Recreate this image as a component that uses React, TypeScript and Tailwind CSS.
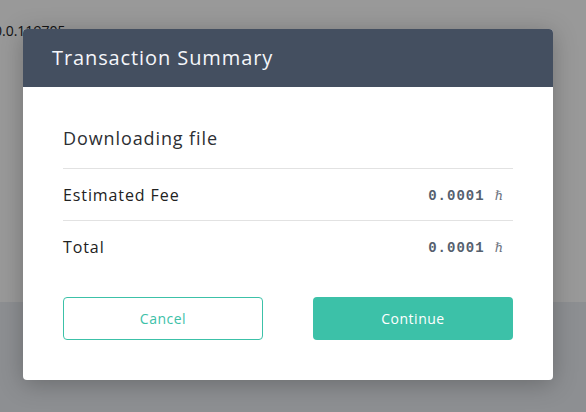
import { useState } from "react";

const rows = [
  { label: "Estimated Fee", value: "0.0001" },
  { label: "Total", value: "0.0001" },
];

function Amount({ value }: { value: string }) {
  return (
    <span className="flex items-baseline gap-[10px] pt-[4px]">
      <span className="font-['Liberation_Mono',monospace] text-[14px] font-bold tracking-[1px] text-[#55606e]">
        {value}
      </span>
      <span className="font-['DejaVu_Serif',serif] text-[13px] italic text-[#6b7280]">
        ℏ
      </span>
    </span>
  );
}

export default function App() {
  const [open, setOpen] = useState(true);

  return (
    <div className="relative h-[412px] w-[586px] overflow-hidden bg-white font-['Open_Sans',sans-serif]">
      {/* page under the dialog */}
      <div className="flex h-full flex-col">
        <div className="-ml-[6px] h-[62px] pt-[20px] text-[14px] text-[#222]">
          0.0.119705
        </div>
        <div className="h-[240px] bg-white"></div>
        <div className="flex-1 bg-[#eceef4]"></div>
      </div>

      {open && (
        <div className="absolute inset-0 bg-black/40">
          <div className="absolute left-[23px] top-[29px] w-[530px] overflow-hidden rounded-[4px] bg-white shadow-[0_4px_24px_rgba(0,0,0,0.25)]">
            <div className="flex h-[58px] items-center bg-[#444f60] px-[29px]">
              <h2 className="text-[20px] font-normal tracking-[0.9px] text-[#f4f6fa]">
                Transaction Summary
              </h2>
            </div>

            <div className="px-[40px] pt-[38px] pb-[40px]">
              <p className="pb-[16px] text-[18px] tracking-[0.9px] text-[#2d2f33]">
                Downloading file
              </p>
              {rows.map((r) => (
                <div
                  key={r.label}
                  className="flex h-[52px] items-center justify-between border-t border-[#e2e2e2] pr-[10px]"
                >
                  <span className="text-[16px] font-medium tracking-[0.9px] text-[#222]">
                    {r.label}
                  </span>
                  <Amount value={r.value} />
                </div>
              ))}

              <div className="mt-[25px] flex justify-between">
                <button
                  onClick={() => setOpen(false)}
                  className="h-[43px] w-[200px] rounded-[4px] border border-[#3cc1a8] bg-white text-[14px] tracking-[0.5px] text-[#3cc1a8]"
                >
                  Cancel
                </button>
                <button className="h-[43px] w-[200px] rounded-[4px] bg-[#3cc1a8] text-[14px] tracking-[0.5px] text-white">
                  Continue
                </button>
              </div>
            </div>
          </div>
        </div>
      )}
    </div>
  );
}
